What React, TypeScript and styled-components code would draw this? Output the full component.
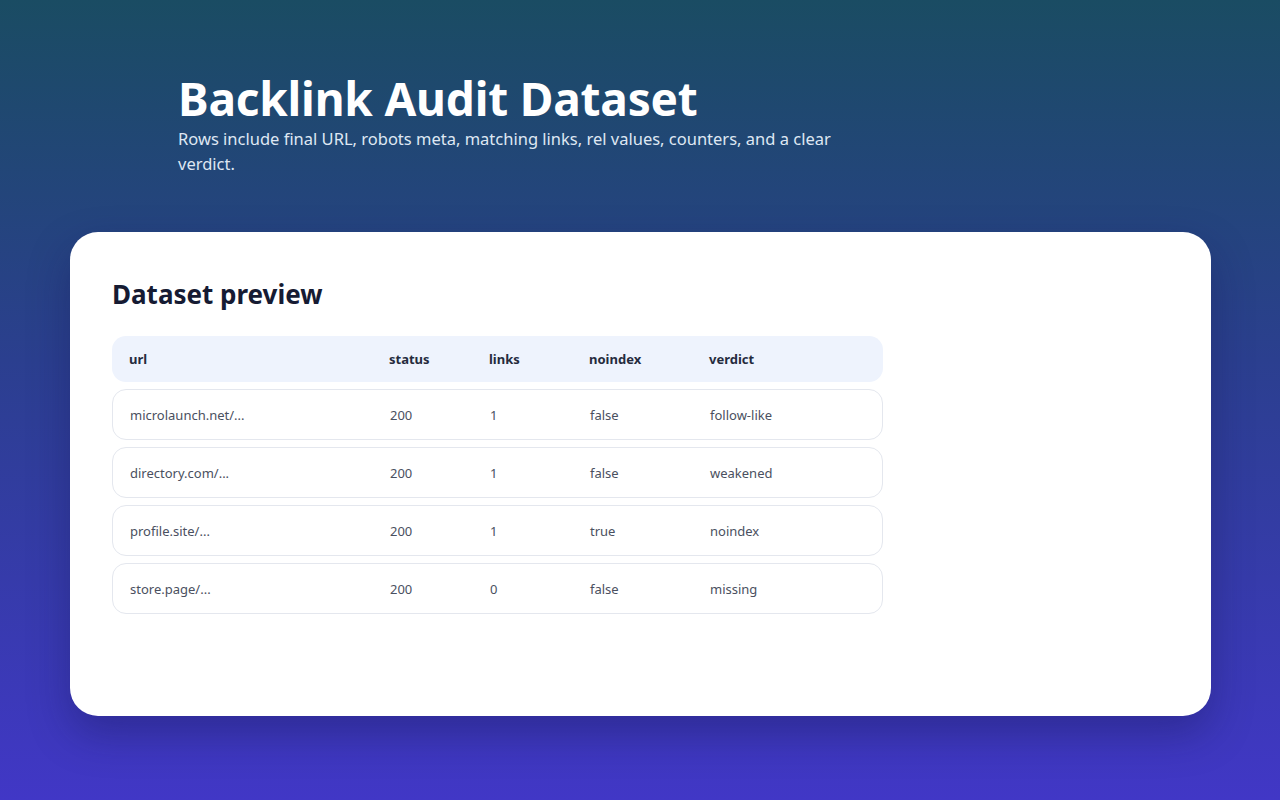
import React from 'react';
import styled, { createGlobalStyle } from 'styled-components';

const GlobalStyle = createGlobalStyle`
  html, body {
    margin: 0;
    padding: 0;
  }
  body {
    font-family: "Noto Sans", "Open Sans", sans-serif;
    background: linear-gradient(180deg, #1a4c63 0%, #2b3f8f 45%, #4137c6 100%);
    min-height: 100vh;
  }
`;

const rows = [
  { url: 'microlaunch.net/...', status: 200, links: 1, noindex: 'false', verdict: 'follow-like' },
  { url: 'directory.com/...', status: 200, links: 1, noindex: 'false', verdict: 'weakened' },
  { url: 'profile.site/...', status: 200, links: 1, noindex: 'true', verdict: 'noindex' },
  { url: 'store.page/...', status: 200, links: 0, noindex: 'false', verdict: 'missing' },
];

function App() {
  return (
    <Page>
      <GlobalStyle />
      <Hero>
        <Title>Backlink Audit Dataset</Title>
        <Lead>
          Rows include final URL, robots meta, matching links, rel values, counters, and a clear
          verdict.
        </Lead>
      </Hero>
      <Card>
        <CardTitle>Dataset preview</CardTitle>
        <Table>
          <HeadRow>
            <span>url</span>
            <span>status</span>
            <span>links</span>
            <span>noindex</span>
            <span>verdict</span>
          </HeadRow>
          {rows.map((r) => (
            <Row key={r.url}>
              <span>{r.url}</span>
              <span>{r.status}</span>
              <span>{r.links}</span>
              <span>{r.noindex}</span>
              <span>{r.verdict}</span>
            </Row>
          ))}
        </Table>
      </Card>
    </Page>
  );
}

export default App;

const Page = styled.div`
  min-height: 100vh;
  box-sizing: border-box;
  padding: 70px 69px 80px 70px;
`;

const Hero = styled.header`
  padding: 0 0 0 108px;
  margin-bottom: 56px;
`;

const Title = styled.h1`
  margin: 0;
  color: #ffffff;
  font-size: 46px;
  line-height: 56px;
  font-weight: 700;
  letter-spacing: -0.2px;
`;

const Lead = styled.p`
  margin: 0;
  max-width: 680px;
  color: #dfe7f3;
  font-size: 16.5px;
  line-height: 25px;
`;

const Card = styled.section`
  background: #ffffff;
  border-radius: 28px;
  height: 484px;
  box-sizing: border-box;
  padding: 44px 42px;
  box-shadow: 0 18px 40px rgba(20, 20, 80, 0.35);
`;

const CardTitle = styled.h2`
  margin: 0 0 24px;
  color: #161b33;
  font-size: 26px;
  line-height: 36px;
  font-weight: 700;
`;

const Table = styled.div`
  width: 771px;
  display: flex;
  flex-direction: column;
  gap: 7px;
`;

const RowBase = styled.div`
  display: grid;
  grid-template-columns: 260px 100px 100px 120px 1fr;
  align-items: center;
  padding: 0 17px;
  border-radius: 14px;
  font-size: 13px;
`;

const HeadRow = styled(RowBase)`
  height: 46px;
  background: #eef3fd;
  color: #252b3d;
  font-weight: 700;
`;

const Row = styled(RowBase)`
  height: 49px;
  border: 1px solid #e4e7ee;
  color: #4a5060;
`;
